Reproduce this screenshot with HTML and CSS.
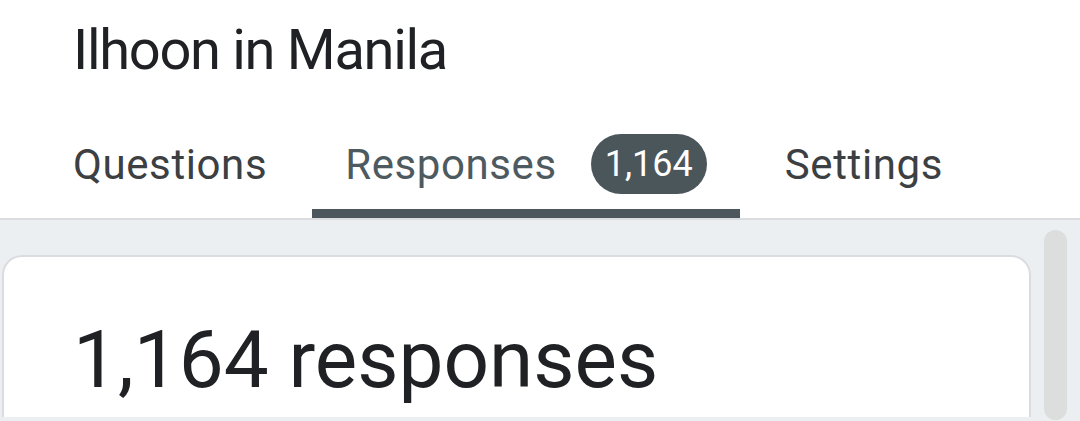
FILE: index.html
```html
<!DOCTYPE html>
<html lang="en">
<head>
<meta charset="UTF-8">
<meta name="viewport" content="width=device-width, initial-scale=1.0">
<title>Ilhoon in Manila</title>
<link rel="stylesheet" href="styles.css">
</head>
<body>

<div class="header">
  <h1 class="form-title">Ilhoon in Manila</h1>

  <div class="tabs">
    <div class="tab">Questions</div>
    <div class="tab active">
      Responses
      <span class="badge">1,164</span>
    </div>
    <div class="tab">Settings</div>
  </div>
</div>

<div class="main">
  <div class="card">
    <div class="count">1,164 responses</div>
  </div>
  <div class="scrollbar"></div>
</div>

</body>
</html>
```

FILE: styles.css
```css
body {
  font-family: Roboto, "Open Sans", sans-serif;
  margin: 0;
  padding: 0;
  background-color: #ebeff1;
  height: 421px;
  overflow: hidden;
}

.header {
  background-color: #fff;
  border-bottom: 2px solid #dadce0;
  height: 218px;
  display: flex;
  flex-direction: column;
}

.form-title {
  margin: 0;
  padding: 18px 0 0 73px;
  font-size: 56px;
  font-weight: 400;
  line-height: 64px;
  color: #202124;
  letter-spacing: -1.3px;
}

.tabs {
  display: flex;
  gap: 12px;
  padding-left: 40px;
  margin-top: auto;
}

.tab {
  display: flex;
  align-items: center;
  height: 84px;
  padding: 0 33px 15px;
  font-size: 42px;
  letter-spacing: 0.6px;
  color: #3c4043;
  box-sizing: border-box;
  border-bottom: 9px solid transparent;
}

.tab.active {
  color: #4d5a60;
  border-bottom-color: #4b575c;
  border-radius: 3px 3px 0 0;
}

.badge {
  display: inline-block;
  margin-left: 34px;
  background-color: #4b565b;
  color: #fff;
  font-size: 36px;
  line-height: 60px;
  letter-spacing: 0;
  padding: 0 14px;
  border-radius: 30px;
}

.main {
  display: flex;
  align-items: flex-start;
  gap: 13px;
  padding: 0 13px 0 2px;
}

.card {
  flex: 1;
  margin-top: 35px;
  background-color: #fff;
  border: 2px solid #dadce0;
  border-bottom: none;
  border-radius: 20px 20px 0 0;
  height: 160px;
  padding-left: 69px;
}

.count {
  font-size: 80px;
  line-height: 90px;
  margin-top: 58px;
  color: #202124;
}

.scrollbar {
  width: 23px;
  height: 190px;
  margin-top: 10px;
  background-color: #dcdedd;
  border-radius: 12px;
}
```
